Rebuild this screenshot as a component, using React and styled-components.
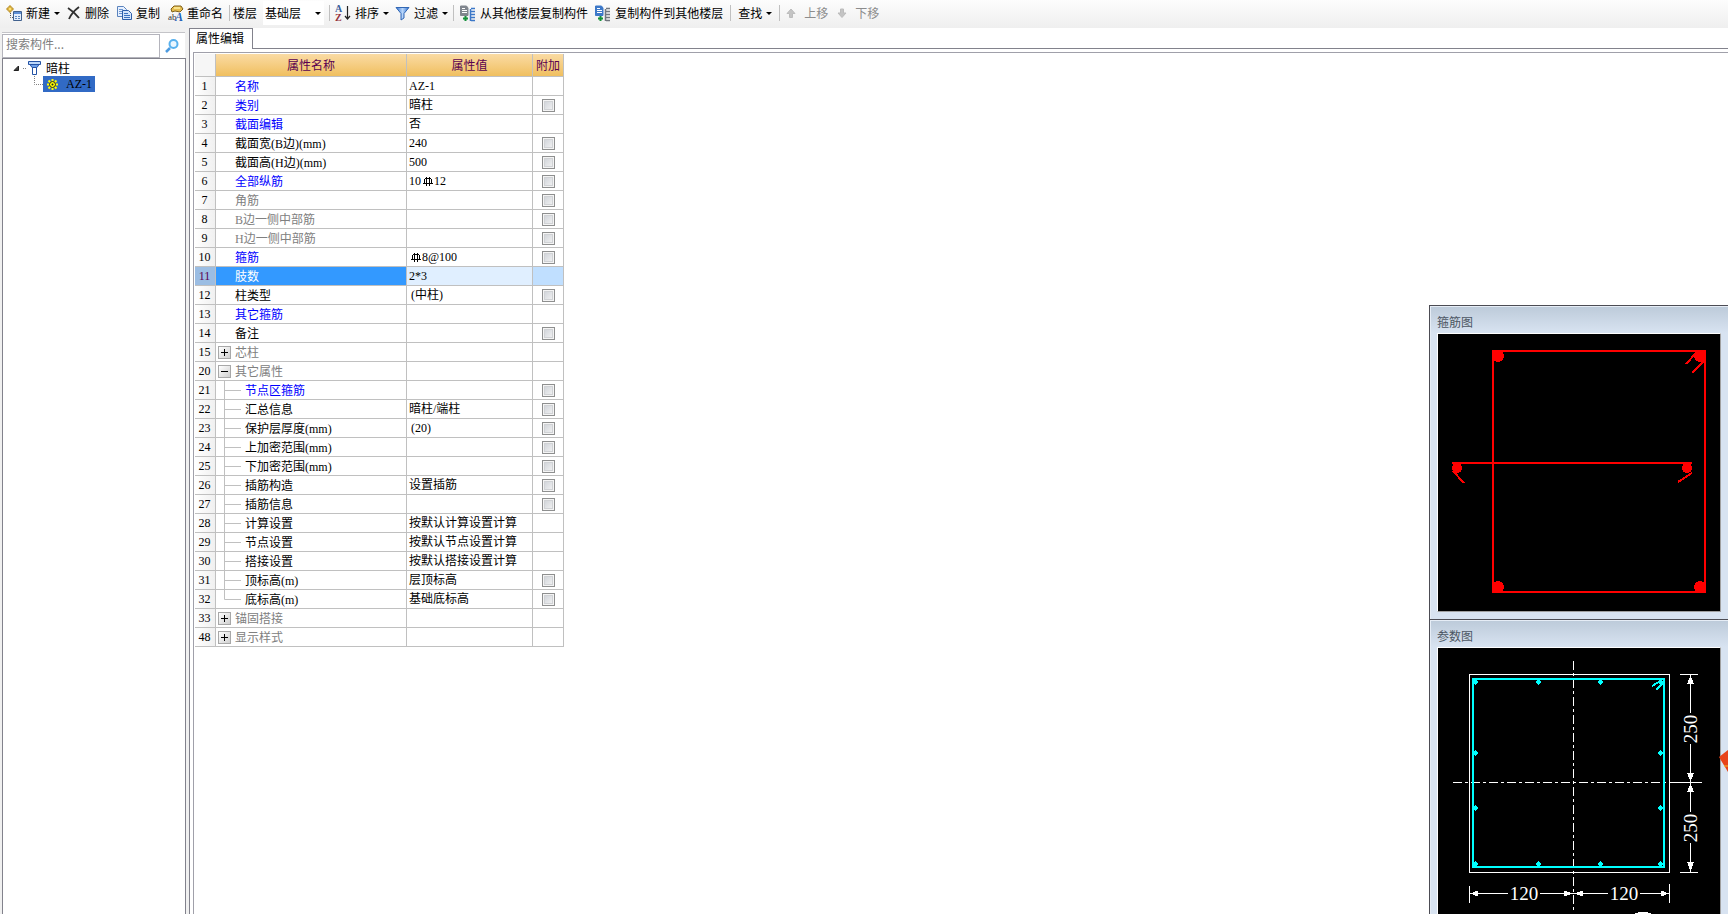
import React from 'react';
import styled, { createGlobalStyle } from 'styled-components';

const cjk = "'Noto Sans CJK SC', sans-serif";
const song = `'Liberation Serif', ${cjk}`;

const GlobalStyle = createGlobalStyle`
  * {
    box-sizing: border-box;
  }

  body {
    margin: 0;
    background: #ffffff;
    color: #000000;
    font-family: ${cjk};
    font-size: 12px;
    line-height: 18px;
    overflow: hidden;
  }

  button, input, select {
    font: inherit;
    color: inherit;
  }
`;

const Page = styled.div`
  display: flex;
  flex-direction: column;
  height: 100vh;
`;

const Toolbar = styled.header`
  display: flex;
  align-items: center;
  height: 28px;
  flex: none;
  padding: 0 6px 2px;
  background: linear-gradient(#fdfdfd, #efefef);
`;

const ToolButton = styled.button`
  display: inline-flex;
  align-items: center;
  gap: ${(props) => props.$gap || 4}px;
  margin-right: ${(props) => props.$after || 7}px;
  padding: 0;
  border: 0;
  background: none;
  white-space: nowrap;
  line-height: 20px;

  &:disabled {
    color: #8c8c8c;
  }
`;

const Caret = styled.span`
  border: 3px solid transparent;
  border-top-color: #000000;
  border-bottom: 0;
  width: 6px;
`;

const Divider = styled.span`
  width: 1px;
  height: 16px;
  margin-right: ${(props) => props.$after || 3}px;
  background: #c0c0c0;
`;

const FloorLabel = styled.label`
  display: flex;
  align-items: center;
  gap: 6px;
  margin-right: 5px;
  white-space: nowrap;
`;

const FloorPicker = styled.span`
  display: flex;
  align-items: center;
  width: 61px;
  height: 24px;
  padding-right: 3px;
  background: #ffffff;

  select {
    flex: 1;
    min-width: 0;
    padding: 0 2px;
    border: 0;
    background: none;
    appearance: none;
    white-space: nowrap;
  }
`;

const Body = styled.div`
  display: flex;
  flex: 1;
  min-height: 0;
`;

const Sidebar = styled.aside`
  display: flex;
  flex-direction: column;
  width: 186px;
  flex: none;
  padding: 4px 0 0 2px;
  background: #f0f0f0;
`;

const SearchRow = styled.form`
  display: flex;
  align-items: center;
  gap: 5px;
  height: 26px;
  margin-right: 1px;
  background: #ffffff;
  border-top: 1px solid #c4c4c8;

  input {
    width: 158px;
    height: 24px;
    padding: 0 3px 5px;
    border: 1px solid #b4b4bc;
    background: #ffffff;
    outline: 0;
  }

  input::placeholder {
    color: #808080;
    opacity: 1;
  }

  button {
    display: flex;
    padding: 0;
    border: 0;
    background: none;
  }
`;

const Tree = styled.ul`
  flex: 1;
  margin: 0;
  padding: 1px 0 0 10px;
  list-style: none;
  background: #ffffff;
  border: 1px solid #82828c;
  border-bottom: 0;
`;

const TreeRow = styled.li`
  display: flex;
  align-items: center;
  height: 16px;
  padding-left: ${(props) => props.$indent || 0}px;
`;

const TreeName = styled.span`
  padding-left: 4px;
  line-height: 18px;
`;

const TreePick = styled.button`
  display: flex;
  align-items: center;
  gap: 8px;
  height: 16px;
  padding: 0 3px 0 4px;
  border: 0;
  background: #316ac5;
  font-family: ${song};
  line-height: 16px;
`;

const Splitter = styled.div`
  width: 3px;
  flex: none;
  background: #f0f0f0;
`;

const Editor = styled.main`
  display: flex;
  flex-direction: column;
  flex: 1;
  min-width: 0;
  border-left: 1px solid #82828c;
`;

const TabStrip = styled.nav`
  display: flex;
  height: 21px;
  flex: none;

  &::after {
    content: '';
    flex: 1;
    border-bottom: 1px solid #82828c;
  }
`;

const Tab = styled.button`
  padding: 0 8px 2px 6px;
  border: 0;
  border-top: 1px solid #82828c;
  border-right: 1px solid #82828c;
  background: #ffffff;
  line-height: 18px;
`;

const Workspace = styled.section`
  display: flex;
  justify-content: space-between;
  align-items: flex-start;
  flex: 1;
  min-height: 0;
  margin: 3px 0 0 3px;
  padding-left: 1px;
  border: 1px solid #a0a0aa;
  border-right: 0;
  border-bottom: 0;
`;

const Grid = styled.table`
  margin-top: 1px;
  border-collapse: separate;
  border-spacing: 0;
  table-layout: fixed;
  width: 369px;
  font-family: ${song};
`;

const HeadCell = styled.th`
  width: ${(props) => props.$width}px;
  height: 23px;
  padding: 2px 0 0;
  border-right: 1px solid #c0c0c0;
  border-bottom: 1px solid #c0c0c0;
  background: ${(props) => (props.$corner ? '#f6f6f6' : 'linear-gradient(#fadba4, #f0bf5f)')};
  color: #5a0050;
  font-weight: 400;
  line-height: 20px;
`;

const cellTones = {
  number: '#9bbde3',
  name: '#3399ff',
  value: '#e0efff',
  extra: '#c0dfff',
};

const Cell = styled.td`
  height: 19px;
  padding: 0 0 0 ${(props) => (props.$kind === 'extra' ? 0 : 2)}px;
  border-right: 1px solid #c0c0c0;
  border-bottom: 1px solid #c0c0c0;
  background: ${(props) => (props.$selected ? cellTones[props.$kind] : '#ffffff')};
  text-align: left;
  line-height: 16px;
  white-space: nowrap;
`;

const NumberCell = styled.th`
  height: 19px;
  padding: 0 1px 0 0;
  border-right: 1px solid #c0c0c0;
  border-bottom: 1px solid #c0c0c0;
  background: ${(props) => (props.$selected ? cellTones.number : 'linear-gradient(90deg, #ffffff, #f0f0f0)')};
  color: ${(props) => (props.$selected ? '#5a0050' : '#000000')};
  font-weight: 400;
  line-height: 16px;
`;

const nameColors = {
  key: '#0000ff',
  off: '#808080',
  plain: '#000000',
};

const NameLine = styled.div`
  display: flex;
  align-items: center;
  height: 18px;
  color: ${(props) => (props.$selected ? '#ffffff' : nameColors[props.$tone])};
  line-height: 18px;
`;

const NameText = styled.span`
  padding-top: 2px;
`;

const Gutter = styled.span`
  display: flex;
  width: ${(props) => (props.$wide ? 27 : 17)}px;
  height: 18px;
  flex: none;
  align-items: center;
`;

const Expander = styled.button`
  display: flex;
  width: 13px;
  height: 13px;
  padding: 0;
  border: 1px solid #a8a8a8;
  background: linear-gradient(135deg, #ffffff, #d0d0d0);
`;

const ExtraCheck = styled.input`
  display: block;
  width: 13px;
  height: 13px;
  margin: 0 auto;
  appearance: none;
  border: 1px solid #8e8f8f;
  background: linear-gradient(135deg, #cbcfd5, #f6f6f6);
  box-shadow: inset 0 0 0 1px #f4f4f4, inset 0 0 0 2px #d0d2d5;
`;

const ValueLine = styled.span`
  display: inline-flex;
  align-items: center;
  height: 17px;
  padding-left: ${(props) => (props.$inset ? 2 : 0)}px;
  vertical-align: top;
`;

const Dock = styled.aside`
  display: flex;
  flex-direction: column;
  align-self: flex-end;
  position: relative;
  width: 299px;
  flex: none;
  border-left: 1px solid #4c4c54;
`;

const Panel = styled.section`
  padding: 0 7px ${(props) => (props.$open ? 0 : 7)}px;
  border-top: 1px solid #4c4c54;
  background: linear-gradient(#bccad9, #d8e3f1 27px);
  box-shadow: inset 1px 1px #e6edf6;
`;

const PanelTitle = styled.h2`
  height: 27px;
  margin: 0;
  padding-top: 7px;
  color: #4c5663;
  font-size: 12px;
  font-weight: 400;
  line-height: 18px;
`;

const Canvas = styled.div`
  border: 1px solid #a0a0a0;
  border-top-color: #ffffff;
  border-left-color: #ffffff;
  border-bottom-width: ${(props) => (props.$open ? 0 : 1)}px;
  background: #000000;

  svg {
    display: block;
    width: 100%;
  }
`;

const Marker = styled.svg`
  position: absolute;
  right: 0;
  bottom: 142px;
`;

const NewIcon = () => (
  <svg width="16" height="16" viewBox="0 0 16 16">
    <path d="M3 1h2v2h2v2H5v2H3V5H1V3h2z" fill="#ffe070" stroke="#b88a1c" />
    <path d="M4.500 8v4.500H8" fill="none" stroke="#555" strokeDasharray="1 1" />
    <path d="M7.500 6.500h8v9h-8z" fill="#e4eefc" stroke="#41618e" />
    <path d="M8 7h7v2H8z" fill="#5e8fd6" />
    <path d="M9 11.500h2M12 11.500h2M9 13.500h2M12 13.500h2" stroke="#5e88c0" />
  </svg>
);

const DeleteIcon = () => (
  <svg width="13" height="14" viewBox="0 0 13 14">
    <path d="M1 2c3 2 8 6 11 10M12 1C8 4 4 8 2 13" fill="none" stroke="#303030" strokeWidth="1.800" />
  </svg>
);

const CopyIcon = () => (
  <svg width="16" height="16" viewBox="0 0 16 16">
    <path d="M1.500 1.500h6l3 3v7h-9z" fill="#e6f0ff" stroke="#5a83bd" />
    <path d="M3 4.500h4M3 6.500h5M3 8.500h5" stroke="#6d96d0" />
    <path d="M6.500 5.500h6l3 3v6h-9z" fill="#d4e5fc" stroke="#2e5ea8" />
    <path d="M8 8.500h4M8 10.500h6M8 12.500h6" stroke="#3c72bf" />
  </svg>
);

const RenameIcon = () => (
  <svg width="17" height="17" viewBox="0 0 17 17" overflow="visible">
    <path d="M4 4l3-3h7l2 3-3 3-5-1-3 1z" fill="#e5bd50" stroke="#806018" />
    <path d="M7 3h6" stroke="#fff1a0" strokeWidth="1.500" />
    <text x="1" y="15" fontFamily="Liberation Serif" fontSize="9" fill="#333">ab</text>
    <text x="8" y="16" fontFamily="Liberation Serif" fontSize="12" fontWeight="700" fontStyle="italic" fill="#1f5fb5">A</text>
  </svg>
);

const SortIcon = () => (
  <svg width="16" height="18" viewBox="0 0 16 18">
    <text x="0" y="8" fontFamily="Liberation Serif" fontSize="10" fontWeight="700" fill="#3a5f9a">A</text>
    <text x="0" y="17" fontFamily="Liberation Serif" fontSize="10" fontWeight="700" fill="#96323c">Z</text>
    <path d="M12.500 2v13M10 12l2.500 3 2.500-3" fill="none" stroke="#222" strokeWidth="1.200" />
  </svg>
);

const FilterIcon = () => (
  <svg width="15" height="15" viewBox="0 0 15 15">
    <defs>
      <linearGradient id="filter">
        <stop offset="0" stopColor="#2f6fd0" />
        <stop offset="0.5" stopColor="#b8d6fa" />
        <stop offset="1" stopColor="#2f6fd0" />
      </linearGradient>
    </defs>
    <path d="M1 1.500h13L9 7.500v4.500l-3 2V7.500z" fill="url(#filter)" stroke="#3267b4" />
  </svg>
);

const FloorCopyIcon = ({ page, stack }) => (
  <svg width="17" height="17" viewBox="0 0 17 17">
    <path d="M1.500 1h6l1.500 2v7.500H1.500z" fill={page} stroke={page} />
    <path d="M3 3.500h3M3 5.500h5M3 7.500h5" stroke="#ffffff" />
    <path d="M11.500 4v12M12 3.500h4M12 6.500h4M12 9.500h4M12 12.500h4M12 15.500h4" stroke={stack} strokeWidth="1.500" />
    <path d="M6.500 11v5M4 13.500h5" stroke="#15903a" strokeWidth="2" />
  </svg>
);

const MoveIcon = ({ down }) => (
  <svg width="11" height="11" viewBox="0 0 11 11">
    <path
      d={down ? 'M3.500 1h3v4H9L5 9.500 1 5h2.500z' : 'M3.500 9.500h3v-4H9L5 1 1 5.500h2.500z'}
      fill="#c4c4c4"
      stroke="#bcbcbc"
    />
  </svg>
);

const SearchIcon = () => (
  <svg width="15" height="15" viewBox="0 0 15 15">
    <path d="M1 14l4-4" stroke="#4c9be0" strokeWidth="2.500" />
    <circle cx="8.500" cy="6" r="4" fill="#eaf6ff" stroke="#58b1ee" strokeWidth="2" />
  </svg>
);

const OpenBranchIcon = () => (
  <svg width="14" height="14" viewBox="0 0 14 14">
    <path d="M5.500 5v4.500H1z" fill="#404040" stroke="#202020" />
    <path d="M10 7.500h4" stroke="#808080" strokeDasharray="1 1" />
  </svg>
);

const ColumnIcon = () => (
  <svg width="15" height="16" viewBox="0 0 15 16">
    <path d="M1.500 1.500h12v3h-12z" fill="#bcd7fa" stroke="#2352a5" />
    <path d="M3 4.500h9l-2 3H5z" fill="#6c9fe8" stroke="#2352a5" />
    <path d="M5.500 7.500h4v7h-4z" fill="#ffffff" stroke="#2352a5" />
  </svg>
);

const LeafLineIcon = () => (
  <svg width="9" height="16" viewBox="0 0 9 16">
    <path d="M.5 0v8.500H9" fill="none" stroke="#808080" strokeDasharray="1 1" />
  </svg>
);

const GearIcon = () => (
  <svg width="11" height="11" viewBox="0 0 11 11">
    <path d="M5.500 0v11M0 5.500h11M1.500 1.500l8 8M9.500 1.500l-8 8" stroke="#ffff00" strokeWidth="2" />
    <circle cx="5.500" cy="5.500" r="3" fill="#ffff00" stroke="#222" />
    <circle cx="5.500" cy="5.500" r="1" fill="#222" />
  </svg>
);

const SteelMark = () => (
  <svg width="13" height="11" viewBox="0 0 13 11" role="img" aria-label="HRB400">
    <path d="M4 2.500h6M4 7.500h6M3.500 3v4M10.500 3v4M5.500 1v9M8.500 1v9M2 7.500h10" fill="none" stroke="#000" />
  </svg>
);

const BranchLine = ({ last }) => (
  <svg width="24" height="18" viewBox="0 0 24 18">
    <path d={last ? 'M6.500 0v9.500H23' : 'M6.500 0v18M7 9.500h16'} fill="none" stroke="#c0c0c0" />
  </svg>
);

const ExpandMark = ({ open }) => (
  <svg width="11" height="11" viewBox="0 0 11 11">
    <path d={open ? 'M2 5.500h7' : 'M2 5.500h7M5.500 2v7'} stroke="#000" />
  </svg>
);

const StirrupDrawing = () => (
  <svg viewBox="0 0 282 277" shapeRendering="crispEdges">
    <g fill="none" stroke="#ff0000" strokeWidth="2">
      <path d="M55 17h212v241H55zM14 129h240" />
      <path d="M259 18l-11 12M266 27l-12 12M15 137l11 12M254 139l-14 9" />
    </g>
    <g fill="#ff0000">
      <circle cx="60" cy="22" r="6" />
      <circle cx="262" cy="22" r="6" />
      <circle cx="60" cy="253" r="6" />
      <circle cx="262" cy="253" r="6" />
      <circle cx="19" cy="134" r="5" />
      <circle cx="249" cy="134" r="5" />
    </g>
  </svg>
);

const bars = [
  [37, 34], [100, 34], [162, 34], [222, 34],
  [37, 105], [222, 105], [37, 160], [222, 160],
  [37, 216], [100, 216], [162, 216], [222, 216],
];

const SectionDrawing = () => (
  <svg viewBox="0 0 282 266" shapeRendering="crispEdges">
    <g fill="none" stroke="#ffffff">
      <path d="M31.500 26.500h200v198h-200z" />
      <path d="M135.500 13v250M15 134.500h250" strokeDasharray="9 3 3 3" />
      <path d="M232 134.500h32M242 26.500h18M242 224.500h18" />
      <path d="M252.500 27v38M252.500 96v68M252.500 195v29" />
      <path d="M31.500 238v17M231.500 236v19M32 245.500h38M102 245.500h68M202 245.500h29" />
    </g>
    <path
      d="M252.500 27l-3.500 9h7zM252.500 134l-3.500-9h7zM252.500 135l-3.500 9h7zM252.500 224l-3.500-10h7zM32 245.500l8-3v6zM135 245.500l-9-3v6zM136 245.500l9-3v6zM231 245.500l-8-3v6z"
      fill="#ffffff"
    />
    <path d="M35 31h191v188H35z" fill="none" stroke="#00ffff" strokeWidth="2" />
    <path d="M214 38l10-6M218 42l8-8" stroke="#00ffff" strokeWidth="2" />
    {bars.map(([x, y]) => (
      <path key={`${x}-${y}`} d={`M${x - 3} ${y}l3-3 3 3-3 3z`} fill="#00ffff" />
    ))}
    <g fill="#ffffff" fontFamily="Liberation Serif" fontSize="19" textAnchor="middle">
      <text x="86" y="252">120</text>
      <text x="186" y="252">120</text>
      <text transform="translate(259 81) rotate(-90)">250</text>
      <text transform="translate(259 180) rotate(-90)">250</text>
    </g>
    <ellipse cx="205" cy="270" rx="13" ry="6" fill="#ffffff" />
  </svg>
);

const steel = (before, after) => (
  <>
    {before}
    <SteelMark />
    {after}
  </>
);

const rows = [
  { no: 1, name: '名称', tone: 'key', value: 'AZ-1' },
  { no: 2, name: '类别', tone: 'key', value: '暗柱', check: true },
  { no: 3, name: '截面编辑', tone: 'key', value: '否' },
  { no: 4, name: '截面宽(B边)(mm)', value: '240', check: true },
  { no: 5, name: '截面高(H边)(mm)', value: '500', check: true },
  { no: 6, name: '全部纵筋', tone: 'key', value: steel('10', '12'), check: true },
  { no: 7, name: '角筋', tone: 'off', check: true },
  { no: 8, name: 'B边一侧中部筋', tone: 'off', check: true },
  { no: 9, name: 'H边一侧中部筋', tone: 'off', check: true },
  { no: 10, name: '箍筋', tone: 'key', value: steel('', '8@100'), check: true },
  { no: 11, name: '肢数', value: '2*3', selected: true },
  { no: 12, name: '柱类型', value: '(中柱)', inset: true, check: true },
  { no: 13, name: '其它箍筋', tone: 'key' },
  { no: 14, name: '备注', check: true },
  { no: 15, name: '芯柱', tone: 'off', group: 'closed' },
  { no: 20, name: '其它属性', tone: 'off', group: 'open' },
  { no: 21, name: '节点区箍筋', tone: 'key', child: true, check: true },
  { no: 22, name: '汇总信息', value: '暗柱/端柱', child: true, check: true },
  { no: 23, name: '保护层厚度(mm)', value: '(20)', inset: true, child: true, check: true },
  { no: 24, name: '上加密范围(mm)', child: true, check: true },
  { no: 25, name: '下加密范围(mm)', child: true, check: true },
  { no: 26, name: '插筋构造', value: '设置插筋', child: true, check: true },
  { no: 27, name: '插筋信息', child: true, check: true },
  { no: 28, name: '计算设置', value: '按默认计算设置计算', child: true },
  { no: 29, name: '节点设置', value: '按默认节点设置计算', child: true },
  { no: 30, name: '搭接设置', value: '按默认搭接设置计算', child: true },
  { no: 31, name: '顶标高(m)', value: '层顶标高', child: true, check: true },
  { no: 32, name: '底标高(m)', value: '基础底标高', child: true, last: true, check: true },
  { no: 33, name: '锚固搭接', tone: 'off', group: 'closed' },
  { no: 48, name: '显示样式', tone: 'off', group: 'closed' },
];

function PropertyRow({ row }) {
  return (
    <tr>
      <NumberCell scope="row" $selected={row.selected}>{row.no}</NumberCell>
      <Cell $kind="name" $selected={row.selected}>
        <NameLine $tone={row.tone || 'plain'} $selected={row.selected}>
          <Gutter $wide={row.child}>
            {row.child && <BranchLine last={row.last} />}
            {row.group && (
              <Expander type="button" aria-label={row.name} aria-expanded={row.group === 'open'}>
                <ExpandMark open={row.group === 'open'} />
              </Expander>
            )}
          </Gutter>
          <NameText>{row.name}</NameText>
        </NameLine>
      </Cell>
      <Cell $kind="value" $selected={row.selected}>
        <ValueLine $inset={row.inset}>{row.value}</ValueLine>
      </Cell>
      <Cell $kind="extra" $selected={row.selected}>
        {row.check && <ExtraCheck type="checkbox" aria-label={`附加 ${row.name}`} />}
      </Cell>
    </tr>
  );
}

export default function App() {
  return (
    <Page>
      <GlobalStyle />
      <Toolbar>
        <ToolButton type="button"><NewIcon />新建<Caret /></ToolButton>
        <ToolButton type="button" $gap={5}><DeleteIcon />删除</ToolButton>
        <ToolButton type="button"><CopyIcon />复制</ToolButton>
        <ToolButton type="button" $gap={3} $after={6}><RenameIcon />重命名</ToolButton>
        <Divider />
        <FloorLabel>
          楼层
          <FloorPicker>
            <select defaultValue="base">
              <option value="base">基础层</option>
            </select>
            <Caret />
          </FloorPicker>
        </FloorLabel>
        <Divider $after={5} />
        <ToolButton type="button" $after={6}><SortIcon />排序<Caret /></ToolButton>
        <ToolButton type="button" $after={5}><FilterIcon />过滤<Caret /></ToolButton>
        <Divider $after={5} />
        <ToolButton type="button" $after={6}><FloorCopyIcon page="#80868e" stack="#3c78c8" />从其他楼层复制构件</ToolButton>
        <ToolButton type="button"><FloorCopyIcon page="#3c78c8" stack="#70767e" />复制构件到其他楼层</ToolButton>
        <Divider $after={7} />
        <ToolButton type="button">查找<Caret /></ToolButton>
        <Divider $after={6} />
        <ToolButton type="button" disabled $gap={7} $after={9}><MoveIcon />上移</ToolButton>
        <ToolButton type="button" disabled $gap={7}><MoveIcon down />下移</ToolButton>
      </Toolbar>

      <Body>
        <Sidebar>
          <SearchRow onSubmit={(event) => event.preventDefault()}>
            <input type="text" placeholder="搜索构件..." aria-label="搜索构件" />
            <button type="submit" aria-label="搜索"><SearchIcon /></button>
          </SearchRow>
          <Tree>
            <TreeRow>
              <OpenBranchIcon />
              <ColumnIcon />
              <TreeName>暗柱</TreeName>
            </TreeRow>
            <TreeRow $indent={21}>
              <LeafLineIcon />
              <TreePick type="button"><GearIcon />AZ-1</TreePick>
            </TreeRow>
          </Tree>
        </Sidebar>
        <Splitter />

        <Editor>
          <TabStrip>
            <Tab type="button">属性编辑</Tab>
          </TabStrip>
          <Workspace>
            <Grid>
              <thead>
                <tr>
                  <HeadCell $width={21} $corner />
                  <HeadCell $width={191}>属性名称</HeadCell>
                  <HeadCell $width={126}>属性值</HeadCell>
                  <HeadCell $width={31}>附加</HeadCell>
                </tr>
              </thead>
              <tbody>
                {rows.map((row) => (
                  <PropertyRow key={row.no} row={row} />
                ))}
              </tbody>
            </Grid>

            <Dock>
              <Panel>
                <PanelTitle>箍筋图</PanelTitle>
                <Canvas><StirrupDrawing /></Canvas>
              </Panel>
              <Panel $open>
                <PanelTitle>参数图</PanelTitle>
                <Canvas $open><SectionDrawing /></Canvas>
              </Panel>
              <Marker width="9" height="22" viewBox="0 0 9 22">
                <path d="M0 7l9-7v22z" fill="#e8431a" />
                <path d="M5 16h4" stroke="#f6c22c" />
              </Marker>
            </Dock>
          </Workspace>
        </Editor>
      </Body>
    </Page>
  );
}
